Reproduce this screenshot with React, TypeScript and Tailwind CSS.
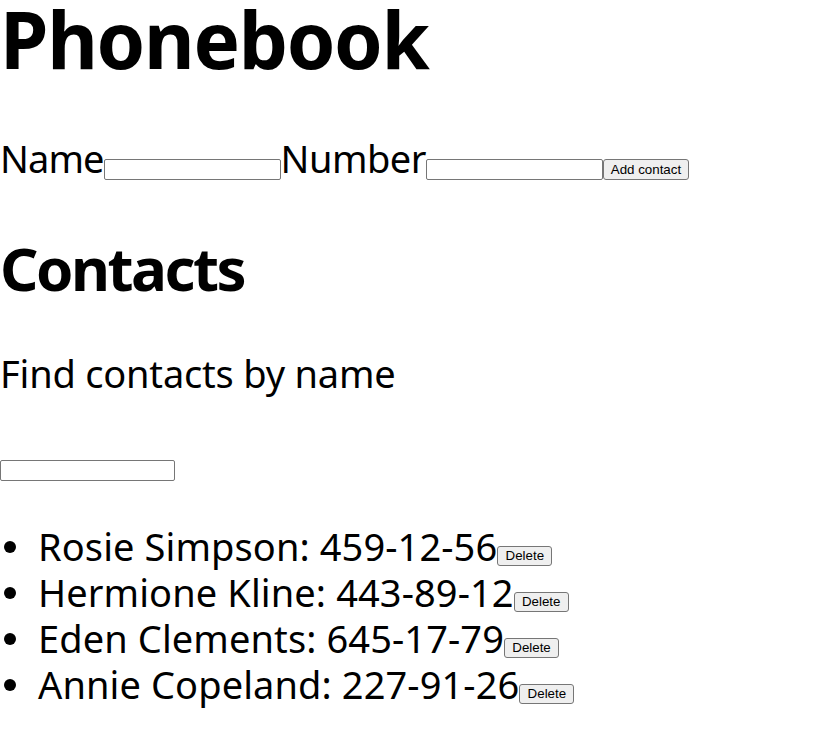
import React from "react";

const contacts = [
  { name: "Rosie Simpson", number: "459-12-56" },
  { name: "Hermione Kline", number: "443-89-12" },
  { name: "Eden Clements", number: "645-17-79" },
  { name: "Annie Copeland", number: "227-91-26" },
];

const font = "font-['Noto_Sans',sans-serif]";
const btn =
  "h-[20px] px-[6px] bg-[#efefef] border border-[#767676] rounded-[3px] text-[13.33px] leading-none text-black font-['Liberation_Sans',Arial,sans-serif]";
const input = "h-[21px] bg-white border border-[#767676] rounded-[2px]";

export default function App() {
  return (
    <div className={`${font} text-black bg-white w-[830px] h-[738px] overflow-hidden`}>
      <h1 className="text-[78px] font-bold leading-[78px] tracking-[-1.3px] m-0">Phonebook</h1>
      <form className="flex items-start mt-[55px]" onSubmit={(e) => e.preventDefault()}>
        <label className="text-[38px] leading-[50px] tracking-[-0.9px]">Name</label>
        <input className={`${input} w-[177px] mt-[26px]`} />
        <label className="text-[38px] leading-[50px] tracking-[-0.5px]">Number</label>
        <input className={`${input} w-[177px] mt-[26px]`} />
        <button type="submit" className={`${btn} mt-[26px] w-[86px] h-[21px]`}>
          Add contact
        </button>
      </form>
      <h2 className="text-[60px] font-bold leading-[80px] tracking-[-2.5px] mt-[45px]">Contacts</h2>
      <p className="text-[38px] leading-[50px] tracking-[-0.2px] mt-[40px]">Find contacts by name</p>
      <input className={`${input} w-[175px] mt-[62px] block`} />
      <ul className="mt-[42px]">
        {contacts.map((c) => (
          <li key={c.name} className="flex items-start h-[46px]">
            <span className="w-[12px] h-[12px] rounded-full bg-black ml-[4px] mt-[18px] mr-[22px] shrink-0" />
            <span className="text-[38px] leading-[46px] tracking-[0.1px] whitespace-nowrap">
              {c.name}: {c.number}
            </span>
            <button className={`${btn} mt-[23px] w-[55px]`}>Delete</button>
          </li>
        ))}
      </ul>
    </div>
  );
}
